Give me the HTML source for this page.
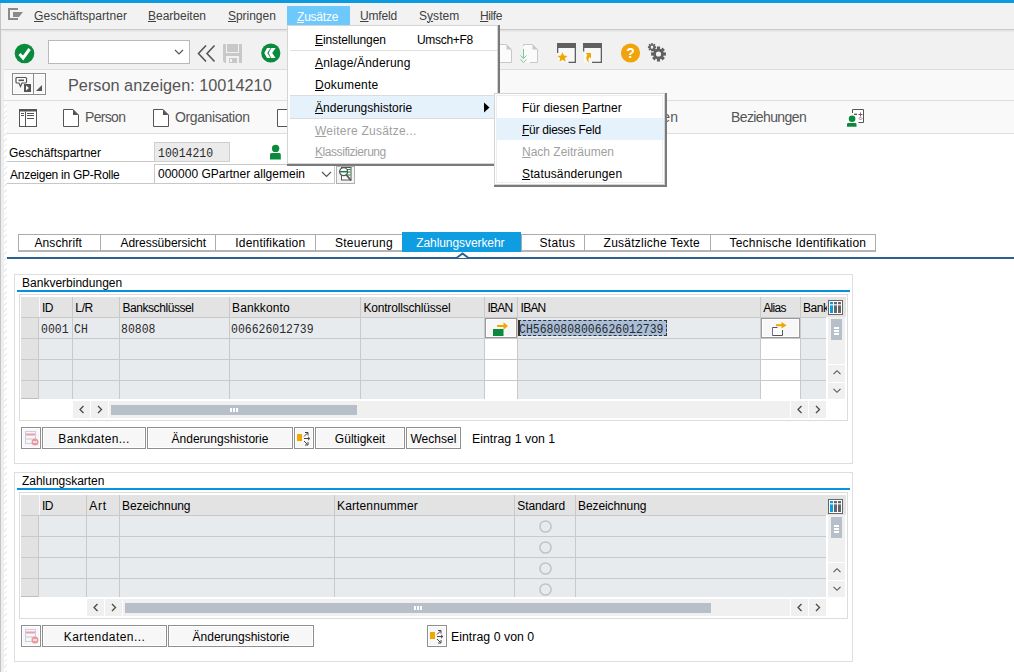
<!DOCTYPE html>
<html><head><meta charset="utf-8">
<style>
*{margin:0;padding:0;box-sizing:border-box}
html,body{width:1014px;height:672px;overflow:hidden;background:#fff;font-family:"Liberation Sans",sans-serif;font-size:12px;color:#000}
.a{position:absolute}
.t{position:absolute;white-space:nowrap;line-height:14px}
.m{font-family:"Liberation Mono",monospace;font-size:12px;transform:scaleX(.955);transform-origin:0 0;color:#2a2a2a}
.u{text-decoration:underline;text-underline-offset:1px;text-decoration-thickness:1px}
.btn{position:absolute;background:#f7f7f7;border:1px solid #8f8f8f;box-shadow:inset 0 0 0 1px #fff;text-align:center;white-space:nowrap;padding-top:1px}
</style></head><body>

<div class="a" style="left:0px;top:0px;width:1014px;height:3px;background:#0b9ae0"></div>
<div class="a" style="left:0px;top:3px;width:1014px;height:26px;background:#f2f2f2"></div>
<div class="a" style="left:0px;top:29px;width:1014px;height:1px;background:#c9c9c9"></div>
<div class="a" style="left:0px;top:30px;width:1014px;height:1px;background:#e4e4e4"></div>
<div class="a" style="left:0px;top:31px;width:1014px;height:38px;background:#f1f1f1"></div>
<div class="a" style="left:0px;top:31px;width:1014px;height:1px;background:#e9e9e9"></div>
<div class="a" style="left:4px;top:69px;width:1010px;height:1px;background:#dcdcdc"></div>
<div class="a" style="left:4px;top:70px;width:1010px;height:30px;background:#f9f9f9"></div>
<div class="a" style="left:4px;top:100px;width:1010px;height:1px;background:#dedede"></div>
<div class="a" style="left:4px;top:101px;width:1010px;height:32px;background:#f9f9f9"></div>
<div class="a" style="left:4px;top:133px;width:1010px;height:1px;background:#dedede"></div>
<div class="a" style="left:0px;top:3px;width:1px;height:669px;background:#c4c4c4"></div>
<div class="a" style="left:1px;top:31px;width:3px;height:641px;background:#efefef"></div>
<div class="a" style="left:4px;top:101px;width:3px;height:571px;background:repeating-linear-gradient(135deg,#e6edf5 0 1.2px,#ffffff 1.2px 4px)"></div>
<svg class="a" style="left:7px;top:8px;" width="18" height="14" viewBox="0 0 18 14"><path d="M1 1h10M2 1v10M1 11h10" stroke="#8a8a8a" stroke-width="2" fill="none"/><path d="M6 4h10l-4 5h-6z" fill="#8a8a8a"/></svg>
<div class="t" style="left:34px;top:9px;color:#404040;letter-spacing:0.062px"><span class="u">G</span>eschäftspartner</div>
<div class="t" style="left:148px;top:9px;color:#404040;letter-spacing:-0.007px"><span class="u">B</span>earbeiten</div>
<div class="t" style="left:228px;top:9px;color:#404040;letter-spacing:-0.035px"><span class="u">S</span>pringen</div>
<div class="a" style="left:287px;top:6px;width:63px;height:19px;background:#6dc8fb"></div>
<div class="t" style="left:297px;top:10px;color:#fff;letter-spacing:-0.217px"><span class="u">Z</span>usätze</div>
<div class="t" style="left:360px;top:9px;color:#404040;letter-spacing:-0.163px"><span class="u">U</span>mfeld</div>
<div class="t" style="left:419px;top:9px;color:#404040;letter-spacing:0.034px">S<span class="u">y</span>stem</div>
<div class="t" style="left:480px;top:9px;color:#404040;letter-spacing:-0.379px"><span class="u">H</span>ilfe</div>
<svg class="a" style="left:14px;top:42.5px;" width="22" height="22" viewBox="0 0 22 22"><circle cx="10.5" cy="10.5" r="9.8" fill="#0a8a3c"/><path d="M5.5 11l3.6 4 6.5-9" stroke="#fff" stroke-width="3" fill="none"/></svg>
<div class="a" style="left:48px;top:40px;width:142px;height:24px;background:#fff;border:1px solid #b9b9b9"></div>
<svg class="a" style="left:174px;top:48px;" width="10" height="8" viewBox="0 0 10 8"><path d="M1 2l4 4 4-4" stroke="#555" stroke-width="1.2" fill="none"/></svg>
<svg class="a" style="left:196px;top:44px;" width="21" height="19" viewBox="0 0 21 19"><path d="M10 1.5L2.5 9.5 10 17.5M18.5 1.5L11 9.5 18.5 17.5" stroke="#555" stroke-width="1.6" fill="none"/></svg>
<svg class="a" style="left:223px;top:44px;" width="19" height="19" viewBox="0 0 19 19"><path d="M0 1a1 1 0 0 1 1-1h2v19H2l-2-2z" fill="#c8c8c8"/><path d="M16 0h2a1 1 0 0 1 1 1v18h-3z" fill="#c8c8c8"/><rect x="4" y="0" width="11" height="8" fill="#c8c8c8"/><rect x="3" y="9" width="13" height="3" fill="#c8c8c8"/><rect x="6" y="14" width="8" height="5" fill="#c8c8c8"/><rect x="7" y="15" width="2" height="3" fill="#f2f2f2"/></svg>
<svg class="a" style="left:260px;top:43px;" width="22" height="21" viewBox="0 0 22 21"><circle cx="10.8" cy="10" r="9.6" fill="#0a8a3c"/><path d="M7 5H10.6L7.3 10 10.6 15H7L4.3 10ZM11.3 5H15.6L12.2 10 15.6 15H11.3L8.6 10Z" fill="#fff"/></svg>
<svg class="a" style="left:500px;top:44px;" width="40" height="20" viewBox="0 0 40 20"><path d="M0 .5H6.5L11.5 5.5V18.5H0" stroke="#c8c8c8" fill="#fbfbfb"/><path d="M6.5 .5V5.5H11.5z" fill="#c8c8c8"/><path d="M23.5 .5H32.5L37.5 5.5V18.5H23.5z" fill="#fbfbfb"/><path d="M23.5 2V.5H32.5L37.5 5.5V18.5H30" stroke="#c8c8c8" fill="none"/><path d="M32.5 .5V5.5H37.5z" fill="#c8c8c8"/><path d="M23.5 5V14.5M20.5 11.5L23.5 14.5 26.5 11.5M20.5 15.5L23.5 18.5 26.5 15.5" stroke="#7cc89a" stroke-width="1" fill="none"/></svg>
<svg class="a" style="left:557px;top:43px;" width="20" height="21" viewBox="0 0 20 21"><rect x="1" y="5" width="17.5" height="14.5" fill="#f8f8f8"/><rect x="0" y="0" width="19" height="5" fill="#606060"/><rect x="0" y="5" width="1.3" height="5" fill="#606060"/><rect x="17.7" y="5" width="1.3" height="15" fill="#606060"/><rect x="11.5" y="18.7" width="7.5" height="1.3" fill="#606060"/><path d="M5.5 9.3l1.45 3.3 3.55.3-2.7 2.35.85 3.5-3.15-1.9-3.15 1.9.85-3.5L.5 12.9l3.55-.3z" fill="#f0a800"/></svg>
<svg class="a" style="left:583px;top:43px;" width="20" height="21" viewBox="0 0 20 21"><rect x="1" y="5" width="17.5" height="14.5" fill="#f8f8f8"/><rect x="0" y="0" width="19" height="5" fill="#606060"/><rect x="0" y="5" width="1.3" height="3.5" fill="#606060"/><rect x="17.7" y="5" width="1.3" height="15" fill="#606060"/><rect x="9" y="18.7" width="10" height="1.3" fill="#606060"/><path d="M2.5 10H8V15.5L6.6 14.1C5 15.5 5.2 17.5 6 19.5C3.5 18 2.5 15 4.3 11.8Z" fill="#f0a800"/></svg>
<svg class="a" style="left:620px;top:43px;" width="21" height="21" viewBox="0 0 21 21"><circle cx="10.5" cy="10" r="9.6" fill="#f0a30a"/><text x="10.5" y="15" text-anchor="middle" font-family="Liberation Sans" font-weight="bold" font-size="14" fill="#fff">?</text></svg>
<svg class="a" style="left:647px;top:42px;" width="22" height="22" viewBox="0 0 22 22"><g transform="translate(11.5,12)"><path d="M5.19 -1.49 L7.42 -1.66 L7.42 1.66 L5.19 1.49 L4.72 2.61 L6.42 4.07 L4.07 6.42 L2.61 4.72 L1.49 5.19 L1.66 7.42 L-1.66 7.42 L-1.49 5.19 L-2.61 4.72 L-4.07 6.42 L-6.42 4.07 L-4.72 2.61 L-5.19 1.49 L-7.42 1.66 L-7.42 -1.66 L-5.19 -1.49 L-4.72 -2.61 L-6.42 -4.07 L-4.07 -6.42 L-2.61 -4.72 L-1.49 -5.19 L-1.66 -7.42 L1.66 -7.42 L1.49 -5.19 L2.61 -4.72 L4.07 -6.42 L6.42 -4.07 L4.72 -2.61Z M2.6 0 A2.6 2.6 0 1 0 -2.6 0 A2.6 2.6 0 1 0 2.6 0Z" fill="#606060" fill-rule="evenodd"/></g><g transform="translate(5,5.2)"><path d="M2.77 -0.86 L4.07 -1.04 L4.07 1.04 L2.77 0.86 L2.57 1.35 L3.61 2.14 L2.14 3.61 L1.35 2.57 L0.86 2.77 L1.04 4.07 L-1.04 4.07 L-0.86 2.77 L-1.35 2.57 L-2.14 3.61 L-3.61 2.14 L-2.57 1.35 L-2.77 0.86 L-4.07 1.04 L-4.07 -1.04 L-2.77 -0.86 L-2.57 -1.35 L-3.61 -2.14 L-2.14 -3.61 L-1.35 -2.57 L-0.86 -2.77 L-1.04 -4.07 L1.04 -4.07 L0.86 -2.77 L1.35 -2.57 L2.14 -3.61 L3.61 -2.14 L2.57 -1.35Z M1.3 0 A1.3 1.6 0 1 0 -1.3 0 A1.3 1.6 0 1 0 1.3 0Z" fill="#606060" fill-rule="evenodd"/></g></svg>
<div class="a" style="left:12px;top:73px;width:34px;height:22px;background:#f7f7f7;border:1px solid #8c8c8c;box-shadow:inset 0 0 0 1px #fff"></div>
<div class="a" style="left:33px;top:73px;width:1px;height:22px;background:#8c8c8c"></div>
<svg class="a" style="left:15px;top:76px;" width="18" height="17" viewBox="0 0 18 17"><path d="M2 1.5h8.5a1 1 0 0 1 1 1v3.5a1 1 0 0 1-1 1H7l-1.5 3.5L4 7H2a1 1 0 0 1-1-1V2.5a1 1 0 0 1 1-1z" fill="#fff" stroke="#555" stroke-width="1.2"/><rect x="3.5" y="3.5" width="5.5" height="1.6" fill="#555"/><rect x="9" y="8" width="7" height="8" fill="#555"/><path d="M11 9.5l3 2.5-3 2.5z" fill="#fff"/></svg>
<svg class="a" style="left:35px;top:84px;" width="8" height="8" viewBox="0 0 8 8"><path d="M7 1v6H1z" fill="#555"/></svg>
<div class="t" style="left:68px;top:76px;font-size:16.3px;line-height:18px;color:#555">Person anzeigen: 10014210</div>
<svg class="a" style="left:19px;top:109px;" width="18" height="18" viewBox="0 0 18 18"><rect x=".5" y=".5" width="17" height="17" fill="#fff" stroke="#555"/><rect x="0" y="0" width="18" height="2.5" fill="#555"/><path d="M6.5 2.5v15" stroke="#555"/><path d="M2 4.5h3M2 6.5h3M8 4.5h7M8 6.5h7M8 9.5h7" stroke="#555" stroke-width="1"/></svg>
<svg class="a" style="left:63px;top:109px;" width="17" height="18" viewBox="0 0 17 18"><path d="M.5 .5h9.5l5.5 5.5v11.5H.5z" fill="#fff" stroke="#555"/><path d="M10 .5v5.5h5.5z" fill="#555"/></svg>
<svg class="a" style="left:153px;top:109px;" width="17" height="18" viewBox="0 0 17 18"><path d="M.5 .5h9.5l5.5 5.5v11.5H.5z" fill="#fff" stroke="#555"/><path d="M10 .5v5.5h5.5z" fill="#555"/></svg>
<svg class="a" style="left:277px;top:109px;" width="17" height="18" viewBox="0 0 17 18"><path d="M.5 .5h9.5l5.5 5.5v11.5H.5z" fill="#fff" stroke="#555"/><path d="M10 .5v5.5h5.5z" fill="#555"/></svg>
<div class="t" style="left:85px;top:110px;font-size:14px;line-height:15px;color:#555;letter-spacing:-0.672px">Person</div>
<div class="t" style="left:175px;top:110px;font-size:14px;line-height:15px;color:#555;letter-spacing:-0.399px">Organisation</div>
<div class="t" style="left:638px;top:110px;font-size:14px;line-height:15px;color:#555;letter-spacing:0.059px">Rollen</div>
<div class="t" style="left:731px;top:110px;font-size:14px;line-height:15px;color:#555;letter-spacing:-0.605px">Beziehungen</div>
<svg class="a" style="left:846px;top:108px;" width="20" height="20" viewBox="0 0 20 20"><rect x="7" y="2" width="10" height="12" fill="#fff"/><path d="M6.5 5V1.5H17.5V14.5H12.5" stroke="#555" fill="none"/><path d="M8 6.3h3" stroke="#444" stroke-width="1.2"/><path d="M14.5 4.5v4M12.5 6.5h4" stroke="#7a4a6a" stroke-width=".9"/><path d="M14.5 9L16 10.5 14.5 12 13 10.5z" stroke="#8a5a8a" stroke-width=".8" fill="none"/><circle cx="6.1" cy="10.8" r="3.3" fill="#0a8a3c"/><path d="M1 18.7V16.3a1.3 1.3 0 0 1 1.3-1.3H9.2a1.3 1.3 0 0 1 1.3 1.3V18.7z" fill="#0a8a3c"/></svg>
<div class="t" style="left:9px;top:146px;;letter-spacing:-0.003px">Geschäftspartner</div>
<div class="a" style="left:7px;top:161px;width:148px;height:1px;background:#c8c8c8"></div>
<div class="a" style="left:154px;top:142px;width:76px;height:20px;background:#ebebeb;border:1px solid #cfcfcf"></div>
<div class="t" style="left:158px;top:145.5px;"><span class="m" style="display:inline-block">10014210</span></div>
<svg class="a" style="left:269px;top:144px;" width="13" height="16" viewBox="0 0 13 16"><circle cx="6.6" cy="4.4" r="3.7" fill="#0a8a3c"/><path d="M1 15.6V10.5a1.5 1.5 0 0 1 1.5-1.5H10.3a1.5 1.5 0 0 1 1.5 1.5V15.6z" fill="#0a8a3c"/></svg>
<div class="t" style="left:10px;top:168px;;letter-spacing:-0.260px">Anzeigen in GP-Rolle</div>
<div class="a" style="left:7px;top:183px;width:148px;height:1px;background:#c8c8c8"></div>
<div class="a" style="left:154px;top:164px;width:181px;height:20px;background:#fff;border:1px solid #c8c8c8"></div>
<div class="t" style="left:158px;top:167px;;letter-spacing:0.010px">000000 GPartner allgemein</div>
<svg class="a" style="left:321px;top:171px;" width="11" height="7" viewBox="0 0 11 7"><path d="M1 1l4.5 4.5L10 1" stroke="#555" stroke-width="1.2" fill="none"/></svg>
<div class="a" style="left:336px;top:166px;width:19px;height:18px;background:#f4f4f4;border:1px solid #b0b0b0"></div>
<svg class="a" style="left:337px;top:166px;" width="18" height="18" viewBox="0 0 18 18"><rect x="4.5" y="1.5" width="9.5" height="12.5" fill="#fff" stroke="#555"/><path d="M10 3.5h3.5M10 6h3.5M10 9h3.5" stroke="#0a8a3c" stroke-width="1"/><circle cx="6.6" cy="5.7" r="4" fill="#fff" stroke="#555" stroke-width="1.2"/><path d="M3 5.7h7" stroke="#0a8a3c" stroke-width="1.5"/><path d="M9.5 9L14 14.5" stroke="#555" stroke-width="1.8"/></svg>
<div class="a" style="left:18px;top:234px;width:858px;height:18px;border:1px solid #ababab;border-bottom:2px solid #b4b4b4;background:#fff"></div>
<div class="a" style="left:100px;top:234px;width:1px;height:17px;background:#ababab"></div>
<div class="a" style="left:215px;top:234px;width:1px;height:17px;background:#ababab"></div>
<div class="a" style="left:315px;top:234px;width:1px;height:17px;background:#ababab"></div>
<div class="a" style="left:402px;top:234px;width:1px;height:17px;background:#ababab"></div>
<div class="a" style="left:521px;top:234px;width:1px;height:17px;background:#ababab"></div>
<div class="a" style="left:584px;top:234px;width:1px;height:17px;background:#ababab"></div>
<div class="a" style="left:710px;top:234px;width:1px;height:17px;background:#ababab"></div>
<div class="a" style="left:402px;top:232px;width:119px;height:20px;background:#0f9de2"></div>
<div class="t" style="left:34.5px;top:236px;;letter-spacing:0.089px">Anschrift</div>
<div class="t" style="left:120.5px;top:236px;;letter-spacing:-0.039px">Adressübersicht</div>
<div class="t" style="left:235.3px;top:236px;;letter-spacing:0.185px">Identifikation</div>
<div class="t" style="left:334.9px;top:236px;;letter-spacing:0.289px">Steuerung</div>
<div class="t" style="left:416.2px;top:236px;color:#fff;letter-spacing:-0.071px">Zahlungsverkehr</div>
<div class="t" style="left:539.5px;top:236px;;letter-spacing:0.294px">Status</div>
<div class="t" style="left:603.6px;top:236px;;letter-spacing:0.231px">Zusätzliche Texte</div>
<div class="t" style="left:729.4px;top:236px;;letter-spacing:0.244px">Technische Identifikation</div>
<div class="a" style="left:7px;top:257px;width:1007px;height:2px;background:#2e5f90"></div>
<svg class="a" style="left:455px;top:250px;" width="15" height="10" viewBox="0 0 15 10"><path d="M1.5 8L7.5 3.5 13.5 8" stroke="#2e5f90" stroke-width="2" fill="#fff"/></svg>
<div class="a" style="left:14px;top:274px;width:839px;height:190px;border:1px solid #dedede;background:#fff"></div>
<div class="t" style="left:22px;top:276px;;letter-spacing:0.008px">Bankverbindungen</div>
<div class="a" style="left:17px;top:290px;width:833px;height:2px;background:#0891dc"></div>
<div class="a" style="left:19px;top:294px;width:829px;height:127px;border:1px solid #dcdcdc;background:#fff"></div>
<div class="a" style="left:21px;top:297px;width:806px;height:20px;background:#e3e3e3"></div>
<div class="a" style="left:827px;top:297px;width:19px;height:20px;background:#e3e3e3"></div>
<div class="a" style="left:21px;top:317px;width:18px;height:82px;background:#e2e2e2"></div>
<div class="a" style="left:39px;top:317px;width:787px;height:82px;background:#e8ebee"></div>
<div class="a" style="left:21px;top:338px;width:805px;height:1px;background:#c9c9c9"></div>
<div class="a" style="left:21px;top:359px;width:805px;height:1px;background:#c9c9c9"></div>
<div class="a" style="left:21px;top:380px;width:805px;height:1px;background:#c9c9c9"></div>
<div class="a" style="left:21px;top:317px;width:805px;height:1px;background:#c9c9c9"></div>
<div class="a" style="left:21px;top:398px;width:18px;height:1px;background:#bdbdbd"></div>
<div class="a" style="left:72px;top:297px;width:1px;height:102px;background:#c9c9c9"></div>
<div class="a" style="left:119px;top:297px;width:1px;height:102px;background:#c9c9c9"></div>
<div class="a" style="left:229px;top:297px;width:1px;height:102px;background:#c9c9c9"></div>
<div class="a" style="left:360px;top:297px;width:1px;height:102px;background:#c9c9c9"></div>
<div class="a" style="left:484px;top:297px;width:1px;height:102px;background:#c9c9c9"></div>
<div class="a" style="left:517px;top:297px;width:1px;height:102px;background:#c9c9c9"></div>
<div class="a" style="left:760px;top:297px;width:1px;height:102px;background:#c9c9c9"></div>
<div class="a" style="left:800px;top:297px;width:1px;height:102px;background:#c9c9c9"></div>
<div class="a" style="left:38px;top:317px;width:1px;height:82px;background:#c9c9c9"></div>
<div class="a" style="left:39px;top:297px;width:1px;height:20px;background:#f8f8f8"></div>
<div class="t" style="left:42px;top:301px;font-size:12px;letter-spacing:-0.700px">ID</div>
<div class="t" style="left:75.3px;top:301px;font-size:12px;letter-spacing:-0.344px">L/R</div>
<div class="t" style="left:122.4px;top:301px;font-size:12px;letter-spacing:-0.427px">Bankschlüssel</div>
<div class="t" style="left:232.1px;top:301px;font-size:12px;letter-spacing:0.098px">Bankkonto</div>
<div class="t" style="left:363.4px;top:301px;font-size:12px;letter-spacing:-0.178px">Kontrollschlüssel</div>
<div class="t" style="left:487.5px;top:301px;font-size:12px;letter-spacing:-0.739px">IBAN</div>
<div class="t" style="left:520.6px;top:301px;font-size:12px;letter-spacing:-0.772px">IBAN</div>
<div class="t" style="left:763.2px;top:301px;font-size:12px;letter-spacing:-0.704px">Alias</div>
<div class="t" style="left:803px;top:301px;font-size:12px;letter-spacing:-0.453px">Bank</div>
<div class="a" style="left:828px;top:317px;width:17px;height:82px;background:#f0f0f0"></div>
<div class="a" style="left:831px;top:319px;width:11px;height:21px;background:#b7c0c9"></div>
<svg class="a" style="left:834px;top:327px;" width="6" height="10" viewBox="0 0 6 10"><rect x="0" y="0" width="5" height="2" fill="#fff"/><rect x="0" y="3" width="5" height="2" fill="#fff"/><rect x="0" y="6" width="5" height="2" fill="#fff"/></svg>
<div class="a" style="left:828px;top:364px;width:17px;height:17px;background:#f0f0f0;border-top:1px solid #fff"></div>
<svg class="a" style="left:832px;top:369px;" width="10" height="7" viewBox="0 0 10 7"><path d="M1.5 5.2l3.5-3.5 3.5 3.5" stroke="#555" stroke-width="1.1" fill="none"/></svg>
<div class="a" style="left:828px;top:382px;width:17px;height:17px;background:#f0f0f0;border-top:1px solid #fff"></div>
<svg class="a" style="left:832px;top:387px;" width="10" height="7" viewBox="0 0 10 7"><path d="M1.5 1.8l3.5 3.5 3.5-3.5" stroke="#555" stroke-width="1.1" fill="none"/></svg>
<div class="a" style="left:485px;top:318px;width:32px;height:20px;background:#fff"></div>
<div class="a" style="left:761px;top:318px;width:39px;height:20px;background:#fff"></div>
<div class="a" style="left:485px;top:339px;width:32px;height:20px;background:#fff"></div>
<div class="a" style="left:761px;top:339px;width:39px;height:20px;background:#fff"></div>
<div class="a" style="left:485px;top:360px;width:32px;height:20px;background:#fff"></div>
<div class="a" style="left:761px;top:360px;width:39px;height:20px;background:#fff"></div>
<div class="a" style="left:485px;top:381px;width:32px;height:20px;background:#fff"></div>
<div class="a" style="left:761px;top:381px;width:39px;height:20px;background:#fff"></div>
<div class="a" style="left:827px;top:297px;width:19px;height:20px;background:#e3e3e3"></div>
<svg class="a" style="left:828px;top:300px;" width="15" height="15" viewBox="0 0 15 15"><rect x=".5" y=".5" width="14" height="14" fill="#fff" stroke="#666"/><rect x="2" y="2" width="3" height="11" fill="#0a9de0"/><rect x="6" y="2" width="3" height="11" fill="#666"/><rect x="10" y="2" width="3" height="11" fill="#666"/><rect x="2" y="4" width="11" height="1.5" fill="#fff" opacity=".75"/></svg>
<div class="t" style="left:41px;top:321.5px;margin-top:0px"><span class="m" style="display:inline-block">0001</span></div>
<div class="t" style="left:74px;top:321.5px;margin-top:0px"><span class="m" style="display:inline-block">CH</span></div>
<div class="t" style="left:121px;top:321.5px;margin-top:0px"><span class="m" style="display:inline-block">80808</span></div>
<div class="t" style="left:231px;top:321.5px;margin-top:0px"><span class="m" style="display:inline-block">006626012739</span></div>
<div class="a" style="left:485px;top:318px;width:32px;height:20px;background:#f7f7f7;border:1px solid #9a9a9a;box-shadow:inset 0 0 0 1px #fff"></div>
<svg class="a" style="left:491px;top:321px;" width="20" height="16" viewBox="0 0 20 16"><rect x="2" y="8" width="10.5" height="7" fill="#0a8a3c"/><path d="M6 5h7" stroke="#f0a800" stroke-width="2"/><path d="M12.5 1.2l4.5 3.8-4.5 3.8z" fill="#f0a800"/></svg>
<div class="a" style="left:518px;top:320px;width:149px;height:16px;background:#a9bed8;border:1px dashed #333"></div>
<div class="a" style="left:518px;top:320px;width:2px;height:16px;background:#3a2f25"></div>
<div class="t" style="left:519px;top:321.5px;margin-top:0px"><span class="m" style="display:inline-block">CH5680808006626012739</span></div>
<div class="a" style="left:761px;top:318px;width:39px;height:20px;background:#f7f7f7;border:1px solid #9a9a9a;box-shadow:inset 0 0 0 1px #fff"></div>
<svg class="a" style="left:772px;top:321px;" width="16" height="16" viewBox="0 0 16 16"><rect x=".5" y="6.5" width="10" height="8" fill="#fff"/><path d="M.5 14.5V6.5H5.5M10.5 9V14.5H.5" stroke="#555" stroke-width="1" fill="none"/><path d="M.5 7V14" stroke="#7a5fc0" stroke-width="1"/><path d="M4 4.2h6.5" stroke="#f0a800" stroke-width="2"/><path d="M9.5 1L14.5 4.2 9.5 7.5z" fill="#f0a800"/></svg>
<div class="a" style="left:109px;top:401px;width:681px;height:17px;background:#f0f0f0"></div>
<div class="a" style="left:111px;top:405px;width:246px;height:10px;background:#b7c0c9"></div>
<svg class="a" style="left:230px;top:408px;" width="9" height="5" viewBox="0 0 9 5"><rect x="0" y="0" width="2" height="4" fill="#fff"/><rect x="3" y="0" width="2" height="4" fill="#fff"/><rect x="6" y="0" width="2" height="4" fill="#fff"/></svg>
<div class="a" style="left:73px;top:401px;width:17px;height:17px;background:#f0f0f0"></div>
<svg class="a" style="left:78px;top:405px;" width="8" height="9" viewBox="0 0 8 9"><path d="M5.5 1l-3.5 3.5 3.5 3.5" stroke="#4a4a4a" stroke-width="1.3" fill="none"/></svg>
<div class="a" style="left:91px;top:401px;width:17px;height:17px;background:#f0f0f0"></div>
<svg class="a" style="left:96px;top:405px;" width="8" height="9" viewBox="0 0 8 9"><path d="M2 1l3.5 3.5L2 8" stroke="#4a4a4a" stroke-width="1.3" fill="none"/></svg>
<div class="a" style="left:791px;top:401px;width:17px;height:17px;background:#f0f0f0"></div>
<svg class="a" style="left:796px;top:405px;" width="8" height="9" viewBox="0 0 8 9"><path d="M5.5 1l-3.5 3.5 3.5 3.5" stroke="#4a4a4a" stroke-width="1.3" fill="none"/></svg>
<div class="a" style="left:809px;top:401px;width:17px;height:17px;background:#f0f0f0"></div>
<svg class="a" style="left:814px;top:405px;" width="8" height="9" viewBox="0 0 8 9"><path d="M2 1l3.5 3.5L2 8" stroke="#4a4a4a" stroke-width="1.3" fill="none"/></svg>
<div class="btn" style="left:21px;top:427px;width:20px;height:22px"></div>
<svg class="a" style="left:24px;top:430px;" width="15" height="16" viewBox="0 0 15 16"><rect x="1.5" y="1.5" width="10" height="12" fill="none" stroke="#d8c8e8" stroke-width="1"/><path d="M2 4.5h9" stroke="#e8a0a8" stroke-width="2"/><path d="M2 9h9" stroke="#c8c8c8" stroke-width="1"/><circle cx="11" cy="12" r="3.5" fill="#e89aa0"/><path d="M9 12h4" stroke="#fff" stroke-width="1.3"/></svg>
<div class="btn" style="left:42px;top:427px;width:104px;height:22px;line-height:20px;letter-spacing:0.328px">Bankdaten...</div>
<div class="btn" style="left:147px;top:427px;width:146px;height:22px;line-height:20px;letter-spacing:0.010px">Änderungshistorie</div>
<div class="btn" style="left:294px;top:427px;width:20px;height:22px"></div>
<svg class="a" style="left:297px;top:430px;" width="16" height="16" viewBox="0 0 16 16"><rect x="0" y="4" width="5" height="7" fill="#f0a800"/><path d="M7 6.5l3.5-3.5M8 2.5h3v3M7 8.5h5.5M11 6.8l1.8 1.7-1.8 1.7M7 11l3.5 3.5M8 15h3v-3" stroke="#444" stroke-width="1" fill="none"/></svg>
<div class="btn" style="left:315px;top:427px;width:90px;height:22px;line-height:20px;letter-spacing:0.030px">Gültigkeit</div>
<div class="btn" style="left:406px;top:427px;width:55px;height:22px;line-height:20px;letter-spacing:0.034px">Wechsel</div>
<div class="t" style="left:472px;top:432px;font-size:12.3px;letter-spacing:0.034px">Eintrag 1 von 1</div>
<div class="a" style="left:14px;top:472px;width:839px;height:190px;border:1px solid #dedede;background:#fff"></div>
<div class="t" style="left:22px;top:474px;;letter-spacing:-0.025px">Zahlungskarten</div>
<div class="a" style="left:17px;top:488px;width:833px;height:2px;background:#0891dc"></div>
<div class="a" style="left:19px;top:492px;width:829px;height:127px;border:1px solid #dcdcdc;background:#fff"></div>
<div class="a" style="left:21px;top:495px;width:806px;height:20px;background:#e3e3e3"></div>
<div class="a" style="left:827px;top:495px;width:19px;height:20px;background:#e3e3e3"></div>
<div class="a" style="left:21px;top:515px;width:18px;height:82px;background:#e2e2e2"></div>
<div class="a" style="left:39px;top:515px;width:787px;height:82px;background:#e8ebee"></div>
<div class="a" style="left:21px;top:536px;width:805px;height:1px;background:#c9c9c9"></div>
<div class="a" style="left:21px;top:557px;width:805px;height:1px;background:#c9c9c9"></div>
<div class="a" style="left:21px;top:578px;width:805px;height:1px;background:#c9c9c9"></div>
<div class="a" style="left:21px;top:515px;width:805px;height:1px;background:#c9c9c9"></div>
<div class="a" style="left:21px;top:596px;width:18px;height:1px;background:#bdbdbd"></div>
<div class="a" style="left:86px;top:495px;width:1px;height:102px;background:#c9c9c9"></div>
<div class="a" style="left:119px;top:495px;width:1px;height:102px;background:#c9c9c9"></div>
<div class="a" style="left:334px;top:495px;width:1px;height:102px;background:#c9c9c9"></div>
<div class="a" style="left:514px;top:495px;width:1px;height:102px;background:#c9c9c9"></div>
<div class="a" style="left:575px;top:495px;width:1px;height:102px;background:#c9c9c9"></div>
<div class="a" style="left:38px;top:515px;width:1px;height:82px;background:#c9c9c9"></div>
<div class="a" style="left:39px;top:495px;width:1px;height:20px;background:#f8f8f8"></div>
<div class="t" style="left:42px;top:499px;font-size:12px;letter-spacing:-0.700px">ID</div>
<div class="t" style="left:89.3px;top:499px;font-size:12px;letter-spacing:0.678px">Art</div>
<div class="t" style="left:122.1px;top:499px;font-size:12px;letter-spacing:-0.099px">Bezeichnung</div>
<div class="t" style="left:337px;top:499px;font-size:12px;letter-spacing:0.130px">Kartennummer</div>
<div class="t" style="left:517.3px;top:499px;font-size:12px;letter-spacing:-0.129px">Standard</div>
<div class="t" style="left:578px;top:499px;font-size:12px;letter-spacing:-0.099px">Bezeichnung</div>
<div class="a" style="left:828px;top:515px;width:17px;height:82px;background:#f0f0f0"></div>
<div class="a" style="left:831px;top:517px;width:11px;height:21px;background:#b7c0c9"></div>
<svg class="a" style="left:834px;top:525px;" width="6" height="10" viewBox="0 0 6 10"><rect x="0" y="0" width="5" height="2" fill="#fff"/><rect x="0" y="3" width="5" height="2" fill="#fff"/><rect x="0" y="6" width="5" height="2" fill="#fff"/></svg>
<div class="a" style="left:828px;top:562px;width:17px;height:17px;background:#f0f0f0;border-top:1px solid #fff"></div>
<svg class="a" style="left:832px;top:567px;" width="10" height="7" viewBox="0 0 10 7"><path d="M1.5 5.2l3.5-3.5 3.5 3.5" stroke="#555" stroke-width="1.1" fill="none"/></svg>
<div class="a" style="left:828px;top:580px;width:17px;height:17px;background:#f0f0f0;border-top:1px solid #fff"></div>
<svg class="a" style="left:832px;top:585px;" width="10" height="7" viewBox="0 0 10 7"><path d="M1.5 1.8l3.5 3.5 3.5-3.5" stroke="#555" stroke-width="1.1" fill="none"/></svg>
<svg class="a" style="left:828px;top:499px;" width="15" height="15" viewBox="0 0 15 15"><rect x=".5" y=".5" width="14" height="14" fill="#fff" stroke="#666"/><rect x="2" y="2" width="3" height="11" fill="#0a9de0"/><rect x="6" y="2" width="3" height="11" fill="#666"/><rect x="10" y="2" width="3" height="11" fill="#666"/><rect x="2" y="4" width="11" height="1.5" fill="#fff" opacity=".75"/></svg>
<svg class="a" style="left:538px;top:519px;" width="15" height="15" viewBox="0 0 15 15"><circle cx="7.5" cy="7.5" r="5.6" fill="none" stroke="#c2c2c2" stroke-width="1.5"/></svg>
<svg class="a" style="left:538px;top:540px;" width="15" height="15" viewBox="0 0 15 15"><circle cx="7.5" cy="7.5" r="5.6" fill="none" stroke="#c2c2c2" stroke-width="1.5"/></svg>
<svg class="a" style="left:538px;top:561px;" width="15" height="15" viewBox="0 0 15 15"><circle cx="7.5" cy="7.5" r="5.6" fill="none" stroke="#c2c2c2" stroke-width="1.5"/></svg>
<svg class="a" style="left:538px;top:582px;" width="15" height="15" viewBox="0 0 15 15"><circle cx="7.5" cy="7.5" r="5.6" fill="none" stroke="#c2c2c2" stroke-width="1.5"/></svg>
<div class="a" style="left:123px;top:599px;width:667px;height:17px;background:#f0f0f0"></div>
<div class="a" style="left:125px;top:603px;width:586px;height:10px;background:#b7c0c9"></div>
<svg class="a" style="left:414px;top:606px;" width="9" height="5" viewBox="0 0 9 5"><rect x="0" y="0" width="2" height="4" fill="#fff"/><rect x="3" y="0" width="2" height="4" fill="#fff"/><rect x="6" y="0" width="2" height="4" fill="#fff"/></svg>
<div class="a" style="left:87px;top:599px;width:17px;height:17px;background:#f0f0f0"></div>
<svg class="a" style="left:92px;top:603px;" width="8" height="9" viewBox="0 0 8 9"><path d="M5.5 1l-3.5 3.5 3.5 3.5" stroke="#4a4a4a" stroke-width="1.3" fill="none"/></svg>
<div class="a" style="left:105px;top:599px;width:17px;height:17px;background:#f0f0f0"></div>
<svg class="a" style="left:110px;top:603px;" width="8" height="9" viewBox="0 0 8 9"><path d="M2 1l3.5 3.5L2 8" stroke="#4a4a4a" stroke-width="1.3" fill="none"/></svg>
<div class="a" style="left:791px;top:599px;width:17px;height:17px;background:#f0f0f0"></div>
<svg class="a" style="left:796px;top:603px;" width="8" height="9" viewBox="0 0 8 9"><path d="M5.5 1l-3.5 3.5 3.5 3.5" stroke="#4a4a4a" stroke-width="1.3" fill="none"/></svg>
<div class="a" style="left:809px;top:599px;width:17px;height:17px;background:#f0f0f0"></div>
<svg class="a" style="left:814px;top:603px;" width="8" height="9" viewBox="0 0 8 9"><path d="M2 1l3.5 3.5L2 8" stroke="#4a4a4a" stroke-width="1.3" fill="none"/></svg>
<div class="btn" style="left:21px;top:625px;width:20px;height:22px"></div>
<svg class="a" style="left:24px;top:628px;" width="15" height="16" viewBox="0 0 15 16"><rect x="1.5" y="1.5" width="10" height="12" fill="none" stroke="#d8c8e8" stroke-width="1"/><path d="M2 4.5h9" stroke="#e8a0a8" stroke-width="2"/><path d="M2 9h9" stroke="#c8c8c8" stroke-width="1"/><circle cx="11" cy="12" r="3.5" fill="#e89aa0"/><path d="M9 12h4" stroke="#fff" stroke-width="1.3"/></svg>
<div class="btn" style="left:42px;top:625px;width:125px;height:22px;line-height:20px;letter-spacing:0.431px">Kartendaten...</div>
<div class="btn" style="left:168px;top:625px;width:146px;height:22px;line-height:20px;letter-spacing:0.010px">Änderungshistorie</div>
<div class="btn" style="left:427px;top:625px;width:20px;height:22px"></div>
<svg class="a" style="left:430px;top:628px;" width="16" height="16" viewBox="0 0 16 16"><rect x="0" y="4" width="5" height="7" fill="#f0a800"/><path d="M7 6.5l3.5-3.5M8 2.5h3v3M7 8.5h5.5M11 6.8l1.8 1.7-1.8 1.7M7 11l3.5 3.5M8 15h3v-3" stroke="#444" stroke-width="1" fill="none"/></svg>
<div class="t" style="left:451px;top:630px;font-size:12.3px;letter-spacing:0.034px">Eintrag 0 von 0</div>
<div class="a" style="left:287px;top:25px;width:211px;height:139px;background:#fff;border:1px solid #d4d4d4;box-shadow:1px 1px 0 1px #7a7a7a"></div>
<div class="a" style="left:290px;top:50px;width:207px;height:1px;background:#e0e0e0"></div>
<div class="a" style="left:290px;top:95px;width:204px;height:24px;background:#e5f1fb;border-top:1px solid #dcdcdc;border-bottom:1px solid #dcdcdc"></div>
<div class="t" style="left:315px;top:33px;color:#000;letter-spacing:-0.098px"><span class="u">E</span>instellungen</div>
<div class="t" style="left:417px;top:33px;color:#000;letter-spacing:-0.294px">Umsch+F8</div>
<div class="t" style="left:315px;top:56px;color:#000;letter-spacing:0.188px"><span class="u">A</span>nlage/Änderung</div>
<div class="t" style="left:315px;top:78px;color:#000;letter-spacing:0.228px"><span class="u">D</span>okumente</div>
<div class="t" style="left:315px;top:101px;color:#000;letter-spacing:0.028px"><span class="u">Ä</span>nderungshistorie</div>
<svg class="a" style="left:483px;top:102px;" width="8" height="11" viewBox="0 0 8 11"><path d="M1 .5l5.5 5-5.5 5z" fill="#000"/></svg>
<div class="t" style="left:315px;top:124px;color:#a0a0a0;letter-spacing:0.244px"><span class="u">W</span>eitere Zusätze...</div>
<div class="t" style="left:315px;top:145px;color:#a0a0a0;letter-spacing:-0.435px"><span class="u">K</span>lassifizierung</div>
<div class="a" style="left:494px;top:93px;width:171px;height:92px;background:#fff;border:1px solid #d4d4d4;box-shadow:inset 0 0 0 1px #fff,inset 0 0 0 2px #eeeeee,1px 1px 0 1px #7a7a7a"></div>
<div class="a" style="left:497px;top:118px;width:167px;height:22px;background:#e5f1fb"></div>
<div class="t" style="left:522px;top:101px;color:#000;letter-spacing:0.017px">Für diesen <span class="u">P</span>artner</div>
<div class="t" style="left:522px;top:123px;color:#000;letter-spacing:-0.258px"><span class="u">F</span>ür dieses Feld</div>
<div class="t" style="left:522px;top:145px;color:#a0a0a0;letter-spacing:-0.003px"><span class="u">N</span>ach Zeiträumen</div>
<div class="t" style="left:522px;top:167px;color:#000;letter-spacing:0.134px"><span class="u">S</span>tatusänderungen</div>
</body></html>
